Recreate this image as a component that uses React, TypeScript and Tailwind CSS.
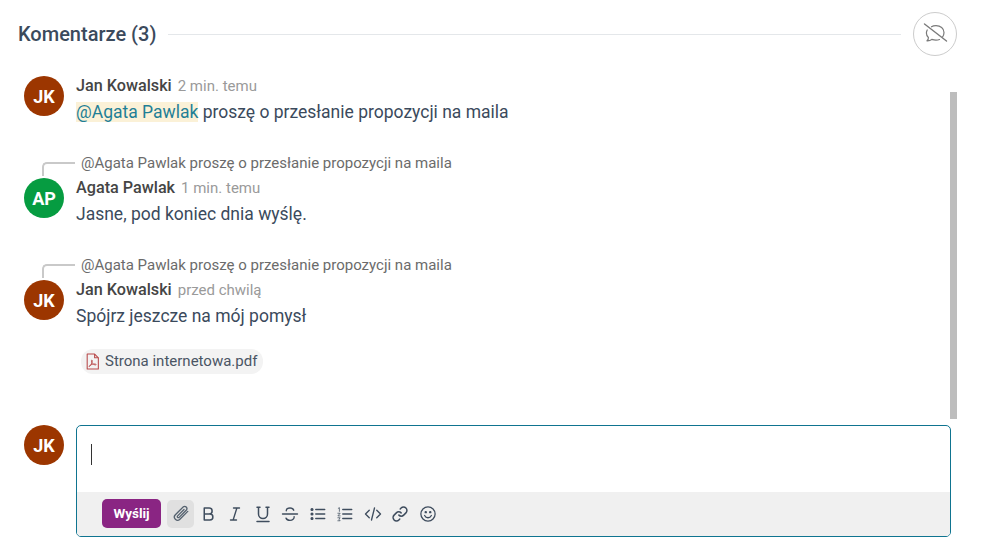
import React from "react";

const F = '[font-family:Roboto,"Liberation_Sans",sans-serif]';

function Avatar({ text, color }: { text: string; color: string }) {
  return (
    <div className={`w-10 h-10 rounded-full shrink-0 flex items-center justify-center text-white font-bold text-[18px] ${color}`}>
      {text}
    </div>
  );
}

function Reply() {
  return (
    <div className="relative h-[20px] pl-[81px] text-[15px] leading-[20px] text-[#6b6b6b]">
      <div className="absolute left-[42px] top-[9px] w-[33px] h-[14px] border-l-2 border-t-2 border-[#c9c9c9] rounded-tl-[5px]" />
      @Agata Pawlak proszę o przesłanie propozycji na maila
    </div>
  );
}

function Meta({ name, time }: { name: string; time: string }) {
  return (
    <div className="h-[20px] leading-[20px] flex gap-[6px]">
      <span className="font-medium text-[#454545] text-[16.2px]">{name}</span>
      <span className="text-[#9a9a9a] text-[15px]">{time}</span>
    </div>
  );
}

function Comment({ initials, color, name, time, body }: { initials: string; color: string; name: string; time: string; body: React.ReactNode }) {
  return (
    <div className="flex gap-3">
      <Avatar text={initials} color={color} />
      <div className="flex-1">
        <Meta name={name} time={time} />
        <div className="text-[17.5px] leading-[26px] mt-[3px] text-[#3b4a5c]">{body}</div>
      </div>
    </div>
  );
}

function Ic({ children, sw = 1.6 }: { children: React.ReactNode; sw?: number }) {
  return (
    <svg width="18" height="18" viewBox="0 0 24 24" fill="none" stroke="#3f4d5e" strokeWidth={sw} strokeLinecap="round" strokeLinejoin="round">
      {children}
    </svg>
  );
}

export default function App() {
  return (
    <div className={`w-[992px] h-[548px] overflow-hidden bg-white ${F}`}>
      <div className="flex items-center pt-3 pl-[18px] pr-[35px] h-[56px]">
        <h2 className="text-[20px] font-medium text-[#3b4a5c] leading-none whitespace-nowrap">Komentarze (3)</h2>
        <div className="flex-1 h-px bg-[#e4e7ea] ml-3 mr-3" />
        <div className="w-11 h-11 rounded-full border border-[#cccccc] flex items-center justify-center">
          <svg width="26" height="26" viewBox="0 0 26 26" fill="none" stroke="#7a7a7a" strokeWidth="1.200" strokeLinecap="round" strokeLinejoin="round">
            <path d="M9.500 5.800C10.800 5 12.300 4.700 14 4.700c4.400 0 8 2.600 8 6.800 0 1.700-.5 3.100-1.400 4.300" />
            <path d="M5.200 9c-.5 1-.8 2-.8 3 0 1.800.700 3.400 2 4.500.1 1.400-.5 2.500-1.400 3.300 1.900.1 3.500-.3 4.800-1.400 1.300.4 2.800.700 4.200.700 1.300 0 2.500-.2 3.500-.6" />
            <path d="M2.500 3l22 17" strokeWidth="1.400" />
          </svg>
        </div>
      </div>

      <div className="relative h-[363px] pl-6 pt-5">
        <div className="absolute left-[950px] top-[36px] w-[7px] h-[327px] bg-[#bdbdbd]" />
        <Comment
          initials="JK"
          color="bg-[#9c3600]"
          name="Jan Kowalski"
          time="2 min. temu"
          body={
            <>
              <span className="bg-[#fbf1d7] text-[#1f7f96]">@Agata Pawlak</span> proszę o przesłanie propozycji na maila
            </>
          }
        />
        <div className="-ml-6 mt-[28px]">
          <Reply />
        </div>
        <div className="mt-[5px]">
          <Comment initials="AP" color="bg-[#069c41]" name="Agata Pawlak" time="1 min. temu" body="Jasne, pod koniec dnia wyślę." />
        </div>
        <div className="-ml-6 mt-[28px]">
          <Reply />
        </div>
        <div className="mt-[5px]">
          <Comment initials="JK" color="bg-[#9c3600]" name="Jan Kowalski" time="przed chwilą" body="Spójrz jeszcze na mój pomysł" />
        </div>
        <div className="ml-[57px] mt-[20px] inline-flex items-center gap-[4px] h-[25px] pl-[3px] pr-[6px] rounded-[12px] bg-[#f3f3f3] text-[15px] text-[#4a5564]">
          <svg width="17" height="17" viewBox="0 0 16 16" fill="none" stroke="#b8494a" strokeWidth="1" strokeLinejoin="round">
            <path d="M3 1h7l3.500 3.500V15H3z" />
            <path d="M10 1v3.500h3.500" />
            <path d="M5 12.800c1.200-.7 2.300-2.800 2.800-5.300.2-1-.8-1.200-.8-.2 0 1.700 1.500 3.500 3.500 4 1.200.2 1.200-1-.2-1-1.700 0-3.800.6-5.200 1.700-.5.400-.4 1 -.1.800z" strokeWidth=".8" />
          </svg>
          Strona internetowa.pdf
        </div>
      </div>

      <div className="flex gap-3 pl-6 pr-[41px] pt-[6px]">
        <Avatar text="JK" color="bg-[#9c3600]" />
        <div className="flex-1 h-[112px] border border-[#0f7490] rounded-[5px] overflow-hidden flex flex-col">
          <div className="flex-1 pl-[14px] pt-[18px]">
            <div className="w-px h-[21px] bg-[#333333]" />
          </div>
          <div className="h-[44px] bg-[#f0f0f0] flex items-center pl-[25px] pb-[1px]">
            <button className="w-[59px] h-[29px] rounded-[5px] bg-[#8a2583] text-white text-[13.5px] font-bold">Wyślij</button>
            <div className="ml-[6px] w-[27px] h-[28px] rounded-[5px] bg-[#e0e0e0] flex items-center justify-center">
              <svg width="18" height="18" viewBox="0 0 24 24" fill="none" stroke="#55626f" strokeWidth="1.800" strokeLinecap="round" strokeLinejoin="round">
                <path d="M21 8.500l-10.500 10.500a4.200 4.200 0 0 1-6-6L15 2.500a3 3 0 0 1 4.200 4.200L9.500 16.500a1.300 1.300 0 0 1-2-2L16 6" />
              </svg>
            </div>
            <div className="flex items-center">
              <div className="w-[27px] flex justify-center"><Ic sw={2}><path d="M7 4h6.500a4 4 0 0 1 0 8H7zM7 12h7.500a4 4 0 0 1 0 8H7zM7 4v16" /></Ic></div>
              <div className="w-[28px] flex justify-center"><Ic sw={1.8}><path d="M10 4h8M6 20h8M14.500 4L9.500 20" /></Ic></div>
              <div className="w-[27px] flex justify-center"><Ic sw={2}><path d="M6 3v9a6 6 0 0 0 12 0V3M4 3h4M16 3h4M4 22h16" /></Ic></div>
              <div className="w-[28px] flex justify-center"><Ic sw={1.8}><path d="M17 7c-.6-2-2.500-3-5-3-3 0-5 1.300-5 3.800M2 12h20M17.500 15.500c.4 3-2.200 5-5.500 5-2.500 0-4.500-1-5.300-3" /></Ic></div>
              <div className="w-[27px] flex justify-center"><Ic sw={1.8}><path d="M9 6h12M9 12h12M9 18h12" /><circle cx="4" cy="6" r="1.200" fill="#3f4d5e" /><circle cx="4" cy="12" r="1.200" fill="#3f4d5e" /><circle cx="4" cy="18" r="1.200" fill="#3f4d5e" /></Ic></div>
              <div className="w-[28px] flex justify-center"><Ic sw={1.8}><path d="M9 6h12M9 12h12M9 18h12" /><path d="M3 4.500l1.500-1v5M2.500 11h3l-3 3.500h3M2.500 17h3l-1.500 2 1.500 2h-3" strokeWidth="1" /></Ic></div>
              <div className="w-[27px] flex justify-center"><Ic sw={1.8}><path d="M7 7l-5 5 5 5M17 7l5 5-5 5M14 4l-4 16" /></Ic></div>
              <div className="w-[28px] flex justify-center"><Ic sw={2}><path d="M10.500 13.500a4.500 4.500 0 0 0 6.400 0l3-3a4.500 4.500 0 0 0-6.400-6.400l-1.200 1.200" /><path d="M13.500 10.500a4.500 4.500 0 0 0-6.400 0l-3 3a4.500 4.500 0 0 0 6.400 6.400l1.200-1.200" /></Ic></div>
              <div className="w-[27px] flex justify-center"><Ic sw={1.7}><circle cx="12" cy="12" r="9.500" /><path d="M7.500 14c1 2 2.700 3 4.500 3s3.500-1 4.500-3" /><circle cx="9" cy="9.500" r=".8" fill="#3f4d5e" /><circle cx="15" cy="9.500" r=".8" fill="#3f4d5e" /></Ic></div>
            </div>
          </div>
        </div>
      </div>
    </div>
  );
}
